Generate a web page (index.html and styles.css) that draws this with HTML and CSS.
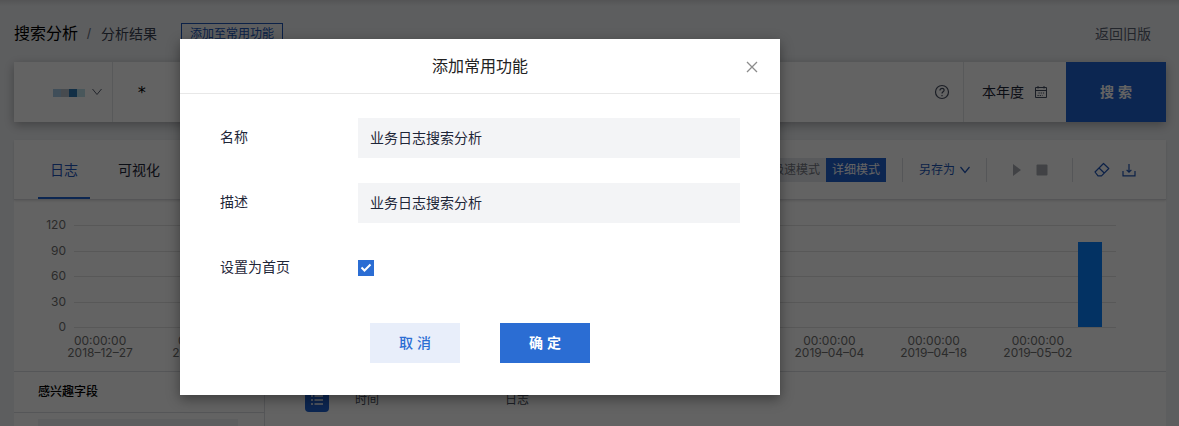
FILE: index.html
```html
<!DOCTYPE html>
<html lang="zh-CN">
<head>
<meta charset="utf-8">
<meta name="viewport" content="width=device-width, initial-scale=1">
<title>搜索分析</title>
<link rel="stylesheet" href="styles.css">
</head>
<body>
<div class="page">
  <header class="page-header">
    <h1 class="page-title">搜索分析</h1>
    <span class="crumb-sep">/</span>
    <span class="crumb">分析结果</span>
    <button class="add-button" type="button">添加至常用功能</button>
    <a class="old-link" href="#">返回旧版</a>
  </header>

  <div class="search-bar">
    <button class="source" type="button" aria-label="数据源">
      <span class="mosaic"><i class="m1"></i><i class="m2"></i><i class="m3"></i><i class="m4"></i></span>
      <svg width="10" height="8" viewBox="0 0 10 8" fill="none" stroke="#596070"><path d="M.5 1 5 6.500 9.500 1"/></svg>
    </button>
    <input class="query" type="text" value="*" aria-label="搜索语句">
    <button class="help" type="button" aria-label="帮助">
      <svg width="16" height="16" viewBox="0 0 16 16" fill="none" stroke="#454d60" stroke-width="1.200"><circle cx="8" cy="8" r="6.500"/><path d="M5.900 6.500C5.900 3.500 10.200 3.700 10.100 6.300 10 7.800 8 7.900 8 9.600M8 11v1.200"/></svg>
    </button>
    <button class="range" type="button">本年度
      <svg width="14" height="14" viewBox="0 0 14 14" fill="none" stroke="#454d60"><path d="M1.500 2.500h11v10h-11zM1.500 5.500h11M4 1v2.500M10 1v2.500"/><path d="M4.500 8h6M3.500 10.500h5" stroke-dasharray="1.200 1"/></svg>
    </button>
    <button class="search-button" type="button">搜 索</button>
  </div>

  <main class="panel">
    <div class="panel-head">
      <nav class="tabs">
        <a class="tab tab-active" href="#">日志</a>
        <a class="tab" href="#">可视化</a>
      </nav>
      <div class="tools">
        <div class="modes">
          <button class="mode" type="button">极速模式</button>
          <button class="mode mode-active" type="button">详细模式</button>
        </div>
        <span class="divider"></span>
        <button class="save-as" type="button">另存为
          <svg width="10" height="8" viewBox="0 0 10 8" fill="none" stroke="#2056b8" stroke-width="1.200"><path d="M.5 1 5 6.500 9.500 1"/></svg>
        </button>
        <span class="divider"></span>
        <div class="playback">
          <button class="icon-button" type="button" aria-label="运行"><svg width="16" height="16" viewBox="0 0 16 16"><path d="M4 2v12l8-6z" fill="#a8abb3"/></svg></button>
          <button class="icon-button" type="button" aria-label="停止"><svg width="16" height="16" viewBox="0 0 16 16"><rect x="2.500" y="2.500" width="11" height="11" rx="1" fill="#a8abb3"/></svg></button>
        </div>
        <span class="divider"></span>
        <div class="actions">
          <button class="icon-button" type="button" aria-label="清除"><svg width="16" height="16" viewBox="0 0 16 16" fill="none" stroke="#2056b8" stroke-width="1.200" stroke-linejoin="round"><path d="M9.500 1.500 14.800 6.500 7.500 13.800H4L1 10zM5 6l5.500 5.200"/></svg></button>
          <button class="icon-button" type="button" aria-label="下载"><svg width="16" height="16" viewBox="0 0 16 16" fill="none" stroke="#2056b8" stroke-width="1.200"><path d="M2 9v4.800h12V9M8 2v8M5.600 7.800 8 10.200l2.400-2.400"/></svg></button>
        </div>
      </div>
    </div>

    <section class="chart" aria-label="日志数量">
      <div class="y-axis"><span>120</span><span>90</span><span>60</span><span>30</span><span>0</span></div>
      <div class="plot">
        <div class="bar"></div>
      </div>
      <div class="x-axis">
        <span>00:00:00<br>2018–12–27</span>
        <span>00:00:00<br>2019–01–10</span>
        <span>00:00:00<br>2019–01–24</span>
        <span>00:00:00<br>2019–02–07</span>
        <span>00:00:00<br>2019–02–21</span>
        <span>00:00:00<br>2019–03–07</span>
        <span>00:00:00<br>2019–03–21</span>
        <span>00:00:00<br>2019–04–04</span>
        <span>00:00:00<br>2019–04–18</span>
        <span>00:00:00<br>2019–05–02</span>
      </div>
    </section>

    <section class="results">
      <aside class="fields">
        <h2 class="fields-title">感兴趣字段</h2>
        <div class="fields-body"><div class="field-box"></div></div>
      </aside>
      <div class="log-head">
        <button class="list-button" type="button" aria-label="列表"><svg width="12" height="12" viewBox="0 0 12 12" stroke="#fff" stroke-width="1.300"><path d="M0 2h2M3.500 2H12M0 6h2M3.500 6H12M0 10h2M3.500 10H12"/></svg></button>
        <span class="time-column">时间</span>
        <span class="log-column">日志</span>
      </div>
    </section>
  </main>
</div>

<div class="overlay">
  <form class="modal" role="dialog" aria-labelledby="modal-title">
    <div class="modal-head">
      <h2 class="modal-title" id="modal-title">添加常用功能</h2>
      <button class="close" type="button" aria-label="关闭"><svg width="12" height="12" viewBox="0 0 12 12" fill="none" stroke="#8c8c8c" stroke-width="1.300"><path d="m1 1 10 10M11 1 1 11"/></svg></button>
    </div>
    <div class="modal-body">
      <div class="form-row"><label for="name">名称</label><input class="text-input" id="name" type="text" value="业务日志搜索分析"></div>
      <div class="form-row"><label for="desc">描述</label><input class="text-input" id="desc" type="text" value="业务日志搜索分析"></div>
      <div class="form-row"><label for="home">设置为首页</label>
        <span class="check"><input id="home" type="checkbox" checked><svg width="16" height="16" viewBox="0 0 16 16" fill="none" stroke="#fff" stroke-width="2"><path d="m3.500 7.500 3 3 6-6"/></svg></span>
      </div>
      <div class="modal-actions">
        <button class="cancel" type="button">取 消</button>
        <button class="confirm" type="submit">确 定</button>
      </div>
    </div>
  </form>
</div>
</body>
</html>
```

FILE: styles.css
```css
* { box-sizing: border-box; }
body {
  margin: 0;
  min-height: 100vh;
  background: #f0f2f5;
  color: #1e2638;
  font: 14px/20px "Liberation Sans", "Noto Sans CJK SC", sans-serif;
}
button, input { margin: 0; padding: 0; border: 0; border-radius: 0; background: none; color: inherit; font: inherit; }
h1, h2 { margin: 0; font-weight: 400; }
a { color: inherit; text-decoration: none; }
svg { display: block; flex: none; }

.page { padding: 0 13px 0 14px; background: linear-gradient(#d8d9dc, #f0f2f5 6px); }
.page-header { display: flex; align-items: center; height: 62px; padding: 6px 15px 0 0; }
.page-title { color: #000; font-size: 16px; }
.crumb-sep { margin: 0 10px 0 9px; color: #6a7080; }
.crumb { color: #3a4152; }
.add-button { height: 22px; margin-left: 24px; padding: 0 8px; border: 1px solid #2056b8; color: #2056b8; font-size: 12px; line-height: 20px; }
.old-link { margin-left: auto; color: #5c6272; }

.search-bar { display: flex; height: 60px; background: #fff; box-shadow: 0 3px 10px rgba(0, 0, 0, .3); }
.source { display: flex; align-items: center; justify-content: flex-end; gap: 7px; width: 99px; padding-right: 10px; border-right: 1px solid #e2e4e8; }
.mosaic { display: flex; margin-top: 2px; }
.mosaic i { width: 8px; height: 8px; }
.m1 { background: #a6c8e4; }
.m2 { background: #b8c2cc; }
.m3 { background: #2f79b4; }
.m4 { background: #bddfea; }
.query { flex: 1; min-width: 0; padding: 0 24px; color: #000; font: 16px "DejaVu Sans Mono", monospace; }
.help { padding: 0 13px; border-right: 1px solid #e2e4e8; }
.range { display: flex; align-items: center; gap: 10px; padding: 0 18px; }
.search-button { width: 100px; background: #1f62d0; color: #fff; font-weight: 700; }

.panel { margin-top: 18px; background: #fff; }
.panel-head { display: flex; justify-content: space-between; height: 60px; padding: 0 29px 0 24px; border-bottom: 1px solid #dadce0; box-shadow: 0 1px 2px rgba(0, 0, 0, .12); }
.tabs { display: flex; gap: 16px; }
.tab { height: 59px; padding: 20px 12px 0; }
.tab-active { border-bottom: 2px solid #1f62d0; color: #1f56bd; }
.tools { display: flex; align-items: center; font-size: 12px; }
.modes { display: flex; background: #e6e8ec; }
.mode { width: 60px; height: 24px; color: #737782; }
.mode-active { background: #1f62d0; color: #fff; }
.divider { width: 1px; height: 24px; margin: 0 16px; background: #dcdee3; }
.save-as { display: flex; align-items: center; gap: 5px; color: #2056b8; }
.playback { display: flex; gap: 9px; padding: 0 6px; }
.actions { display: flex; gap: 11px; padding-left: 5px; }

.chart {
  display: grid;
  grid-template-columns: 52px 1fr;
  column-gap: 8px;
  padding: 18px 50px 0 0;
  border-bottom: 1px solid #dcdee2;
  color: #707070;
  font: 12px/12px Inter, sans-serif;
}
.y-axis { display: flex; flex-direction: column; justify-content: space-between; height: 116px; text-align: right; }
.y-axis span { line-height: 14px; }
.plot {
  display: flex;
  justify-content: flex-end;
  align-items: flex-end;
  height: 103px;
  margin-top: 7px;
  padding-right: 14px;
  padding-bottom: 1px;
  background:
    linear-gradient(#e3e3e3, #e3e3e3) 0 0 / 100% 1px no-repeat,
    linear-gradient(#e3e3e3, #e3e3e3) 0 25% / 100% 1px no-repeat,
    linear-gradient(#e3e3e3, #e3e3e3) 0 50% / 100% 1px no-repeat,
    linear-gradient(#e3e3e3, #e3e3e3) 0 75% / 100% 1px no-repeat,
    linear-gradient(#e3e3e3, #e3e3e3) 0 100% / 100% 1px no-repeat;
}
.bar { width: 24px; height: 85px; background: #0882ff; }
.x-axis { grid-column: 2; display: grid; grid-template-columns: repeat(10, 1fr); padding: 1px 0 12px; }
.x-axis span { display: flex; flex-direction: column; align-items: center; width: 50%; text-align: center; white-space: nowrap; }

.results { display: flex; }
.fields { width: 251px; border-right: 1px solid #dcdee2; }
.fields-title { padding: 10px 24px; border-bottom: 1px solid #dcdee2; color: #000; font-size: 12px; font-weight: 500; }
.fields-body { padding: 6px 26px 0 24px; }
.field-box { height: 7px; background: #f0f1f4; }
.log-head { display: flex; flex: 1; align-items: flex-start; padding: 16px 40px 0; color: #4a5160; font-size: 12px; line-height: 24px; }
.list-button { display: grid; place-items: center; width: 24px; height: 24px; border-radius: 4px; background: #1f62d0; }
.time-column { width: 150px; margin-left: 26px; }
.log-column { flex: 1; }

.overlay { position: absolute; inset: 0; display: flex; align-items: flex-start; padding: 39px 0 0 180px; background: rgba(0, 0, 0, .61); overflow: hidden; }
.modal { width: 600px; max-width: 100%; background: #fff; box-shadow: 0 4px 12px rgba(0, 0, 0, .4); }
.modal-head { display: grid; grid-template-columns: 1fr auto 1fr; align-items: center; height: 55px; padding: 2px 22px 0; border-bottom: 1px solid #e8e8e8; }
.modal-title { grid-column: 2; color: #222; font-size: 16px; }
.close { justify-self: end; }
.modal-body { padding: 24px 40px 32px; }
.form-row { display: flex; align-items: center; height: 40px; margin-bottom: 25px; }
.form-row label { width: 138px; padding-bottom: 2px; }
.text-input { flex: 1; min-width: 0; height: 40px; padding: 0 12px 2px; background: #f3f4f6; }
.check { display: grid; width: 16px; height: 16px; }
.check input, .check svg { grid-area: 1 / 1; }
.check input { width: 16px; height: 16px; appearance: none; background: #fff; border: 1px solid #2b6dd3; }
.check input:checked { background: #2b6dd3; }
.check svg { pointer-events: none; }
.modal-actions { display: flex; gap: 40px; padding: 10px 0 0 150px; }
.cancel, .confirm { width: 90px; height: 40px; }
.cancel { background: #e8eefa; color: #2b6dd3; font-weight: 500; }
.confirm { background: #2b6dd3; color: #fff; font-weight: 700; }
```
